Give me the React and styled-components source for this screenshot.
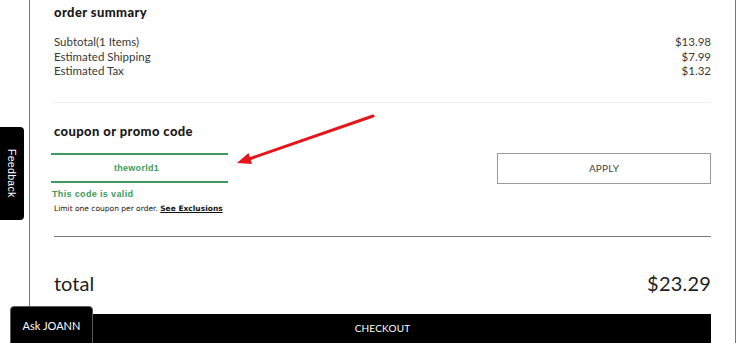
import React from 'react';
import styled, { createGlobalStyle } from 'styled-components';

const GlobalStyle = createGlobalStyle`
  html, body {
    margin: 0;
    padding: 0;
    background: #fff;
    overflow: hidden;
  }
  body {
    font-family: Lato, "Liberation Sans", Arial, sans-serif;
    color: #222;
  }
`;

const Page = styled.div`
  position: relative;
  width: 756px;
  height: 343px;
  overflow: hidden;
`;

const Card = styled.div`
  margin-left: 29px;
  width: 657px;
  padding: 4px 24px 0;
  border-left: 1px solid #777;
  border-right: 1px solid #777;
  min-height: 360px;
`;

const Heading = styled.h3`
  margin: 0;
  font-size: 13px;
  line-height: 16px;
  font-weight: 900;
  letter-spacing: 0.4px;
  color: #1a1a1a;
  margin-top: ${p => p.$top || 0}px;
`;

const Rows = styled.div`
  margin-top: 15px;
`;

const Row = styled.div`
  display: flex;
  justify-content: space-between;
  font-size: 11.5px;
  line-height: 14.5px;
  color: #383838;
  font-weight: 400;
`;

const Divider = styled.hr`
  margin: ${p => p.$top}px 0 0;
  border: 0;
  height: ${p => p.$h}px;
  background: ${p => p.$color};
`;

const CouponRow = styled.div`
  display: flex;
  justify-content: space-between;
  align-items: center;
  margin-top: 14px;
`;

const CodeInput = styled.div`
  width: 177px;
  height: 30px;
  margin-left: -3px;
  box-sizing: border-box;
  border-top: 2px solid #3d9a5c;
  border-bottom: 2px solid #3d9a5c;
  display: flex;
  align-items: center;
  justify-content: center;
  font-family: "Liberation Sans", Arial, sans-serif;
  font-weight: 700;
  font-size: 9px;
  letter-spacing: 0.3px;
  color: #3d9a5c;
  padding-right: 6px;
`;

const ApplyButton = styled.button`
  width: 214px;
  height: 31px;
  border: 1px solid #9a9a9a;
  background: #fff;
  font-family: Lato, "Liberation Sans", sans-serif;
  font-size: 10px;
  color: #444;
  letter-spacing: 0.2px;
  cursor: pointer;
`;

const Valid = styled.div`
  margin-top: 4px;
  margin-left: -2px;
  font-family: "Liberation Sans", Arial, sans-serif;
  font-weight: 700;
  font-size: 9px;
  line-height: 12px;
  letter-spacing: 0.35px;
  color: #3d9a5c;
`;

const Limit = styled.div`
  margin-top: 3px;
  font-family: "DejaVu Sans", Verdana, sans-serif;
  font-size: 7.5px;
  line-height: 12px;
  color: #111;
  a {
    color: #111;
    font-weight: 700;
    text-decoration: underline;
  }
`;

const TotalRow = styled.div`
  display: flex;
  justify-content: space-between;
  align-items: center;
  margin-top: 34px;
  font-size: 20px;
  line-height: 24px;
  color: #1e1e1e;
`;

const Amount = styled.span`
  font-size: 20px;
  letter-spacing: 0.2px;
`;

const CheckoutButton = styled.button`
  display: block;
  width: 100%;
  margin-top: 19px;
  height: 34px;
  padding: 0 0 7px;
  background: #000;
  border: 0;
  color: #fff;
  font-family: Lato, "Liberation Sans", sans-serif;
  font-size: 10px;
  letter-spacing: 0.2px;
`;

const FeedbackTab = styled.div`
  position: absolute;
  left: 0;
  top: 127px;
  width: 24px;
  height: 93px;
  background: #000;
  border-radius: 0 4px 4px 0;
  display: flex;
  align-items: center;
  justify-content: center;
  color: #fff;
  font-family: "Liberation Sans", Arial, sans-serif;
  font-size: 10.5px;
  writing-mode: vertical-rl;
  letter-spacing: 0.3px;
`;

const AskButton = styled.div`
  position: absolute;
  left: 10px;
  top: 306px;
  width: 83px;
  height: 40px;
  background: #000;
  border: 1px solid #5a5a5a;
  border-radius: 4px 4px 0 0;
  color: #fff;
  font-size: 11px;
  display: flex;
  justify-content: center;
  padding-top: 12px;
  box-sizing: border-box;
`;

const Arrow = styled.svg`
  position: absolute;
  left: 230px;
  top: 108px;
`;

export default function App() {
  return (
    <Page>
      <GlobalStyle />
      <Card>
        <Heading>order summary</Heading>
        <Rows>
          <Row><span>Subtotal(1 Items)</span><span>$13.98</span></Row>
          <Row><span>Estimated Shipping</span><span>$7.99</span></Row>
          <Row><span>Estimated Tax</span><span>$1.32</span></Row>
        </Rows>
        <Divider $top={23} $h={1} $color="#ececec" />
        <Heading $top={20}>coupon or promo code</Heading>
        <CouponRow>
          <CodeInput>theworld1</CodeInput>
          <ApplyButton>APPLY</ApplyButton>
        </CouponRow>
        <Valid>This code is valid</Valid>
        <Limit>
          Limit one coupon per order. <a>See Exclusions</a>
        </Limit>
        <Divider $top={21} $h={1.5} $color="#7a7a7a" />
        <TotalRow>
          <span>total</span>
          <Amount>$23.29</Amount>
        </TotalRow>
        <CheckoutButton>CHECKOUT</CheckoutButton>
      </Card>

      <Arrow width="150" height="62" viewBox="0 0 150 62">
        <line x1="143" y1="8" x2="19" y2="51" stroke="#e3161b" strokeWidth="3" strokeLinecap="round" />
        <polygon points="7,55 22,56 18.5,45" fill="#e3161b" />
      </Arrow>

      <FeedbackTab>Feedback</FeedbackTab>
      <AskButton>Ask JOANN</AskButton>
    </Page>
  );
}
